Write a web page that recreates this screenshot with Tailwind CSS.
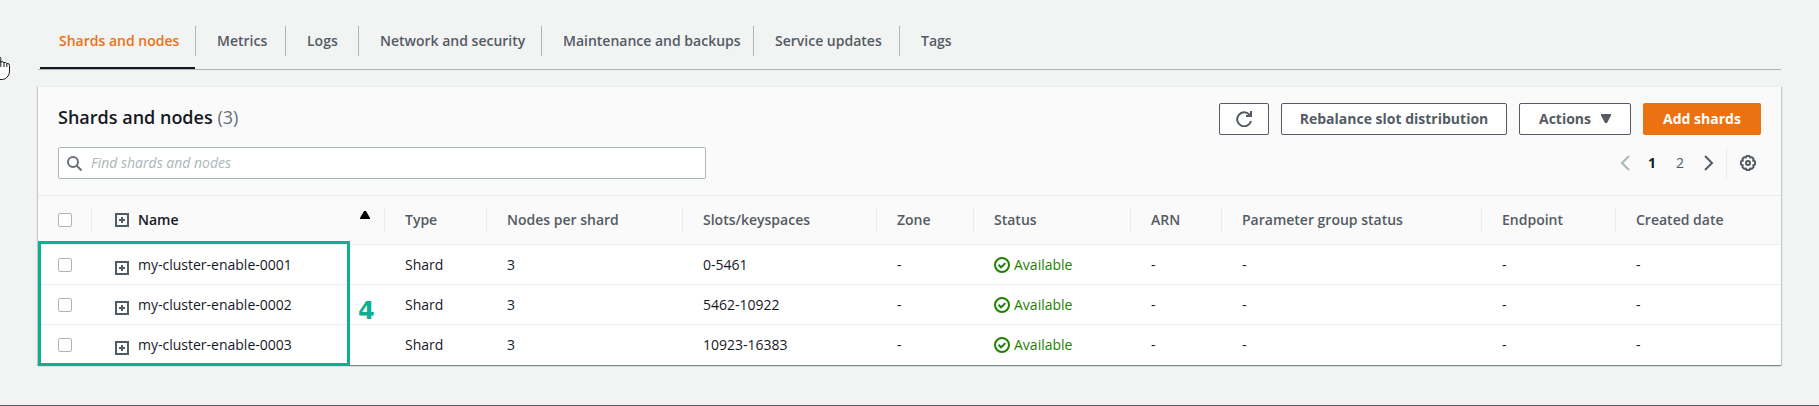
<!DOCTYPE html>
<html lang="en">
<head>
  <meta charset="UTF-8">
  <meta name="viewport" content="width=device-width, initial-scale=1.0">
  <title>Shards and nodes</title>
  <!-- Tailwind CSS -->
  <script src="https://cdn.jsdelivr.net/npm/@tailwindcss/browser@4"></script>
</head>
<body class="relative min-h-screen overflow-x-hidden bg-[#f2f3f3] font-['Open_Sans','Noto_Sans',sans-serif] text-sm leading-[22px] text-[#16191f] border-b border-[#545b64]">

  <!-- Shared icons -->
  <svg class="hidden" aria-hidden="true">
    <symbol id="icon-expand" viewBox="0 0 14 14">
      <rect x="1" y="1" width="12" height="12" fill="none" stroke="#545b64" stroke-width="2"/>
      <path d="M4 7h6M7 4v6" stroke="#545b64" stroke-width="2"/>
    </symbol>
    <symbol id="icon-ok" viewBox="0 0 16 16">
      <circle cx="8" cy="8" r="7" fill="none" stroke="#1d8102" stroke-width="2"/>
      <path d="M4.5 7.8l2.6 2.5 4.3-4.2" fill="none" stroke="#1d8102" stroke-width="2"/>
    </symbol>
  </svg>

  <!-- Mouse pointer -->
  <svg class="absolute left-0 top-14 h-6 w-3" viewBox="0 0 12 24" aria-hidden="true">
    <path d="M-2 1H-.5Q.8 1 .8 2.500V6Q3 5.200 4 6.600q2-.6 2.700.9Q9.500 7 9.500 9.500V15q0 3-1.500 5-2 3.500-5.500 3.500H-2z" fill="#fff" stroke="#16191f"/>
    <path d="M.8 5v6M4 7v4M6.800 8v3" stroke="#16191f"/>
  </svg>

  <!-- Tabs -->
  <nav class="px-[38px] pt-[15px]">
    <ul class="flex h-[55px] whitespace-nowrap border-b border-[#aab7b8] pl-0.5 pt-[11px] font-semibold text-[#545b64]">
      <li class="-mb-px h-[43px] w-[155px] border-b-2 border-[#16191f]"><a href="#" class="block px-[19px] py-1 text-[#ec7211]">Shards and nodes</a></li>
      <li class="h-[30px] w-[90px] border-l border-[#aab7b8]"><a href="#" class="block px-[21px] py-1">Metrics</a></li>
      <li class="h-[30px] w-[73px] border-l border-[#aab7b8]"><a href="#" class="block px-[21px] py-1">Logs</a></li>
      <li class="h-[30px] w-[183px] border-l border-[#aab7b8]"><a href="#" class="block px-[21px] py-1">Network and security</a></li>
      <li class="h-[30px] w-[212px] border-l border-[#aab7b8]"><a href="#" class="block px-[21px] py-1">Maintenance and backups</a></li>
      <li class="h-[30px] w-[146px] border-l border-[#aab7b8]"><a href="#" class="block px-[21px] py-1">Service updates</a></li>
      <li class="h-[30px] border-l border-[#aab7b8]"><a href="#" class="block px-[21px] py-1">Tags</a></li>
    </ul>
  </nav>

  <!-- Shards panel -->
  <main class="px-[38px] pb-10 pt-4">
    <section class="border-t border-[#eaeded] bg-white shadow-[0_1px_1px_0_rgba(0,28,36,0.3),1px_1px_1px_0_rgba(0,28,36,0.15),-1px_1px_1px_0_rgba(0,28,36,0.15)]">
      <div class="bg-[#fafafa] px-5 pb-4 pt-4">
        <div class="flex items-start justify-between">
          <h2 class="text-lg font-semibold leading-7">Shards and nodes <span class="font-normal text-[#687078]">(3)</span></h2>
          <div class="flex gap-3 font-bold text-[#545b64]">
            <button type="button" aria-label="Refresh" class="flex h-8 w-[50px] items-center justify-center rounded-xs border border-[#545b64] bg-white">
              <svg class="size-4" viewBox="0 0 16 16" fill="none" stroke="currentColor" stroke-width="2" aria-hidden="true">
                <path d="M15 10a7 7 0 1 1-1.500-6.300L14.500 5"/>
                <path d="M15 0v5h-5"/>
              </svg>
            </button>
            <button type="button" class="h-8 w-[226px] rounded-xs border border-[#545b64] bg-white">Rebalance slot distribution</button>
            <button type="button" class="flex h-8 w-[112px] items-center justify-center gap-2.5 rounded-xs border border-[#545b64] bg-white">
              Actions
              <svg class="h-2.5 w-2.5" viewBox="0 0 10 10" fill="currentColor" aria-hidden="true"><path d="M0 0h10v1.500L6 9H4L0 1.500z"/></svg>
            </button>
            <button type="button" class="h-8 w-[118px] rounded-xs bg-[#ec7211] text-white">Add shards</button>
          </div>
        </div>
        <div class="mt-3 flex items-center justify-between">
          <label class="flex h-8 w-[648px] items-center gap-[9px] rounded-xs border border-[#aab7b8] bg-white pl-2">
            <svg class="size-[15px]" viewBox="0 0 15 15" fill="none" stroke="#687078" stroke-width="2" aria-hidden="true">
              <circle cx="6" cy="6" r="5"/>
              <path d="M9.500 9.500l5 5"/>
            </svg>
            <input type="search" aria-label="Find shards and nodes" placeholder="Find shards and nodes" class="flex-1 outline-none placeholder:italic placeholder:text-[#aab7b8]">
          </label>
          <div class="flex items-center text-[#545b64]">
            <button type="button" aria-label="Previous page" class="mr-[18px]">
              <svg class="h-4 w-2.5" viewBox="0 0 10 16" fill="none" stroke="#aab7b8" stroke-width="2" aria-hidden="true"><path d="M9 1L2 8l7 7"/></svg>
            </button>
            <button type="button" aria-current="page" class="w-7 text-left font-bold text-[#16191f]">1</button>
            <button type="button" class="w-7 text-left">2</button>
            <button type="button" aria-label="Next page">
              <svg class="h-4 w-2.5" viewBox="0 0 10 16" fill="none" stroke="currentColor" stroke-width="2" aria-hidden="true"><path d="M1 1l7 7-7 7"/></svg>
            </button>
            <button type="button" aria-label="Preferences" class="ml-3 flex h-8 items-center border-l border-[#eaeded] pl-[13px] pr-[5px]">
              <svg class="size-4" viewBox="0 0 16 16" fill="none" stroke="currentColor" aria-hidden="true">
                <path stroke-width="2" stroke-linejoin="round" d="M6.500 1h3l.6 1.600 1.700-.5 1.800 1.800-.5 1.700L15 6.500v3l-1.900.8.5 1.800-1.800 1.800-1.700-.5L9.500 15h-3l-.6-1.600-1.700.5-1.800-1.800.5-1.800L1 9.500v-3l1.900-.9-.5-1.700 1.800-1.800 1.700.5z"/>
                <circle cx="8" cy="8" r="2" stroke-width="2"/>
              </svg>
            </button>
          </div>
        </div>
      </div>

      <!-- Nodes table -->
      <div class="relative">
        <table class="w-full table-fixed border-collapse text-left">
          <colgroup>
            <col class="w-[54px]">
            <col class="w-[293px]">
            <col class="w-[102px]">
            <col class="w-[196px]">
            <col class="w-[194px]">
            <col class="w-[97px]">
            <col class="w-[157px]">
            <col class="w-[91px]">
            <col class="w-[260px]">
            <col class="w-[134px]">
            <col>
          </colgroup>
          <thead class="border-y border-[#eaeded] bg-[#fafafa] leading-6 text-[#545b64]">
            <tr class="h-[49px]">
              <th class="p-0"><div class="flex h-6 items-center border-r border-[#eaeded] pl-5"><input type="checkbox" aria-label="Select all" class="size-3.5 appearance-none rounded-xs border border-[#aab7b8] bg-white"></div></th>
              <th class="p-0 font-semibold" aria-sort="ascending">
                <div class="flex h-6 items-center border-r border-[#eaeded] pl-[23px] pr-3.5 text-[#16191f]">
                  <button type="button" aria-label="Expand all"><svg class="size-3.5"><use href="#icon-expand"/></svg></button>
                  <span class="ml-[9px] flex-1">Name</span>
                  <svg class="mb-2.5 h-2 w-2.5" viewBox="0 0 10 8" aria-hidden="true"><path d="M4 0h2l4 7v1H0V7z"/></svg>
                </div>
              </th>
              <th class="p-0 font-semibold"><div class="h-6 border-r border-[#eaeded] pl-5">Type</div></th>
              <th class="p-0 font-semibold"><div class="h-6 border-r border-[#eaeded] pl-5">Nodes per shard</div></th>
              <th class="p-0 font-semibold"><div class="h-6 border-r border-[#eaeded] pl-5">Slots/keyspaces</div></th>
              <th class="p-0 font-semibold"><div class="h-6 border-r border-[#eaeded] pl-5">Zone</div></th>
              <th class="p-0 font-semibold"><div class="h-6 border-r border-[#eaeded] pl-5">Status</div></th>
              <th class="p-0 font-semibold"><div class="h-6 border-r border-[#eaeded] pl-5">ARN</div></th>
              <th class="p-0 font-semibold"><div class="h-6 border-r border-[#eaeded] pl-5">Parameter group status</div></th>
              <th class="p-0 font-semibold"><div class="h-6 border-r border-[#eaeded] pl-5">Endpoint</div></th>
              <th class="p-0 font-semibold"><div class="h-6 pl-5">Created date</div></th>
            </tr>
          </thead>
          <tbody class="divide-y divide-[#eaeded]">
            <tr class="h-10">
              <td class="p-0 pl-5"><input type="checkbox" aria-label="Select my-cluster-enable-0001" class="block size-3.5 appearance-none rounded-xs border border-[#aab7b8]"></td>
              <td class="p-0 pl-[23px]"><div class="flex items-center gap-[9px]"><button type="button" aria-label="Expand" class="pt-1.5"><svg class="size-3.5"><use href="#icon-expand"/></svg></button>my-cluster-enable-0001</div></td>
              <td class="p-0 pl-5">Shard</td>
              <td class="p-0 pl-5">3</td>
              <td class="p-0 pl-5">0-5461</td>
              <td class="p-0 pl-5">-</td>
              <td class="p-0 pl-5"><span class="flex items-center gap-1 text-[#1d8102]"><svg class="size-4"><use href="#icon-ok"/></svg>Available</span></td>
              <td class="p-0 pl-5">-</td>
              <td class="p-0 pl-5">-</td>
              <td class="p-0 pl-5">-</td>
              <td class="p-0 pl-5">-</td>
            </tr>
            <tr class="h-10">
              <td class="p-0 pl-5"><input type="checkbox" aria-label="Select my-cluster-enable-0002" class="block size-3.5 appearance-none rounded-xs border border-[#aab7b8]"></td>
              <td class="p-0 pl-[23px]"><div class="flex items-center gap-[9px]"><button type="button" aria-label="Expand" class="pt-1.5"><svg class="size-3.5"><use href="#icon-expand"/></svg></button>my-cluster-enable-0002</div></td>
              <td class="p-0 pl-5">Shard</td>
              <td class="p-0 pl-5">3</td>
              <td class="p-0 pl-5">5462-10922</td>
              <td class="p-0 pl-5">-</td>
              <td class="p-0 pl-5"><span class="flex items-center gap-1 text-[#1d8102]"><svg class="size-4"><use href="#icon-ok"/></svg>Available</span></td>
              <td class="p-0 pl-5">-</td>
              <td class="p-0 pl-5">-</td>
              <td class="p-0 pl-5">-</td>
              <td class="p-0 pl-5">-</td>
            </tr>
            <tr class="h-10">
              <td class="p-0 pl-5"><input type="checkbox" aria-label="Select my-cluster-enable-0003" class="block size-3.5 appearance-none rounded-xs border border-[#aab7b8]"></td>
              <td class="p-0 pl-[23px]"><div class="flex items-center gap-[9px]"><button type="button" aria-label="Expand" class="pt-1.5"><svg class="size-3.5"><use href="#icon-expand"/></svg></button>my-cluster-enable-0003</div></td>
              <td class="p-0 pl-5">Shard</td>
              <td class="p-0 pl-5">3</td>
              <td class="p-0 pl-5">10923-16383</td>
              <td class="p-0 pl-5">-</td>
              <td class="p-0 pl-5"><span class="flex items-center gap-1 text-[#1d8102]"><svg class="size-4"><use href="#icon-ok"/></svg>Available</span></td>
              <td class="p-0 pl-5">-</td>
              <td class="p-0 pl-5">-</td>
              <td class="p-0 pl-5">-</td>
              <td class="p-0 pl-5">-</td>
            </tr>
          </tbody>
        </table>
        <!-- Callout around the shard names -->
        <div class="pointer-events-none absolute -bottom-px left-0 h-[125px] w-[312px] border-3 border-[#09b091]"></div>
        <span class="absolute bottom-[38px] left-80 font-['DejaVu_Sans',sans-serif] text-2xl font-bold text-[#09b091]">4</span>
      </div>
    </section>
  </main>

</body>
</html>
